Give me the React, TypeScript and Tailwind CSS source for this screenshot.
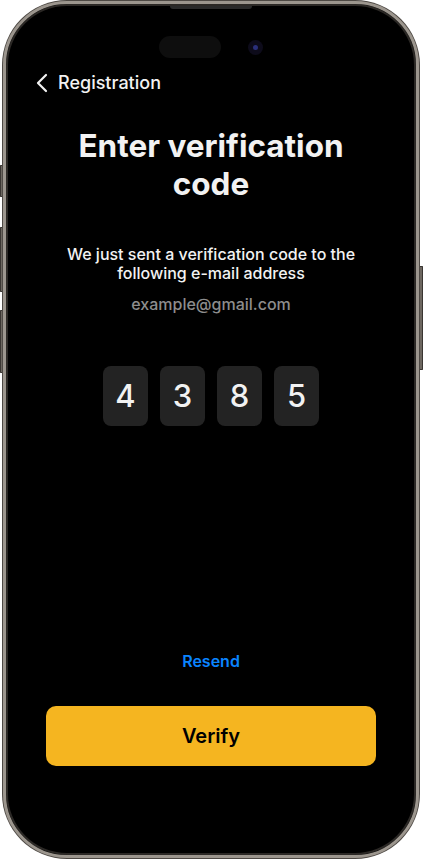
const DIGITS = ["4", "3", "8", "5"];

function SideButton({ className }: { className: string }) {
  return (
    <div
      className={`absolute w-[4px] rounded-[1px] bg-[#6d6760] shadow-[inset_0_0_0_1px_#3a3632] ${className}`}
    />
  );
}

export default function App() {
  return (
    <div className="relative h-[860px] w-[423px] overflow-hidden bg-white font-['Inter','Noto_Sans',sans-serif]">
      {/* hardware buttons */}
      <SideButton className="left-0 top-[165px] h-[32px]" />
      <SideButton className="left-0 top-[227px] h-[65px]" />
      <SideButton className="left-0 top-[310px] h-[63px]" />
      <SideButton className="right-0 top-[266px] h-[104px]" />

      {/* phone body */}
      <div className="relative ml-[3px] mt-[1px] flex h-[857px] w-[416px] flex-col items-center rounded-[64px] border-[3px] border-[#9c968e] bg-black shadow-[0_0_0_1px_#4e4944,inset_0_0_0_2px_#2b2825]">
        {/* speaker grille */}
        <div className="absolute left-[164px] top-[2px] h-[3px] w-[82px] rounded-b-sm bg-[#2a2a2a]" />

        {/* dynamic island */}
        <div className="mt-[32px] flex h-[22px] items-center gap-[27px]">
          <div className="h-[22px] w-[62px] rounded-full bg-[#0e0e0e]" />
          <div className="flex h-[15px] w-[15px] items-center justify-center rounded-full bg-[#0d0b1a]">
            <div className="h-[5px] w-[5px] rounded-full bg-[#2a2f7a]" />
          </div>
        </div>

        {/* nav */}
        <div className="mt-[13px] flex w-full items-center gap-[10px] pl-[30px] text-[18px] leading-6 font-medium text-[#f2f2f2]">
          <svg width="12" height="20" viewBox="0 0 12 20" fill="none" aria-hidden>
            <path d="M10 2 2 10l8 8" stroke="#f2f2f2" strokeWidth="2.2" strokeLinecap="round" strokeLinejoin="round" />
          </svg>
          <span>Registration</span>
        </div>

        <h1 className="mt-[32px] w-[320px] text-center text-[31.5px] leading-[38px] font-bold text-[#f2f2f2]">
          Enter verification code
        </h1>

        <p className="mt-[42px] w-[320px] text-center text-[16px] leading-[19px] font-medium text-[#f2f2f2]">
          We just sent a verification code to the following e-mail address
        </p>
        <p className="mt-[12px] text-[16px] leading-[19px] font-medium text-[#8d8d8d]">
          example@gmail.com
        </p>

        <div className="mt-[52px] flex gap-[12px]">
          {DIGITS.map((d, i) => (
            <div
              key={i}
              className="flex h-[60px] w-[45px] items-center justify-center rounded-[8px] bg-[#232323] text-[31px] font-medium text-[#f2f2f2]"
            >
              {d}
            </div>
          ))}
        </div>

        <button className="mt-[225px] text-[16px] leading-5 font-semibold text-[#0a84ff]">
          Resend
        </button>

        <button className="mt-[35px] flex h-[60px] w-[330px] items-center justify-center rounded-[10px] bg-[#f5b520] text-[20px] font-semibold text-black">
          Verify
        </button>
      </div>
    </div>
  );
}
